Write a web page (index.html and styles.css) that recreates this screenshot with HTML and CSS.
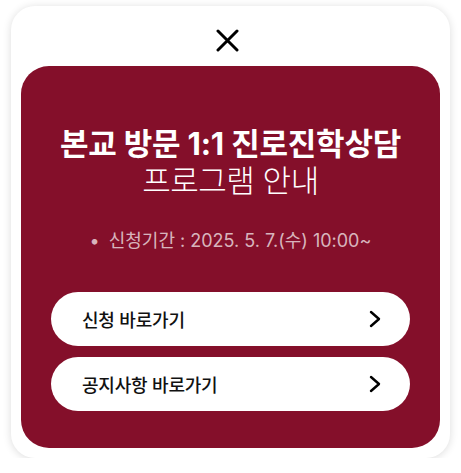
FILE: index.html
```html
<!DOCTYPE html>
<html lang="ko">
<head>
<meta charset="utf-8">
<title>본교 방문 1:1 진로진학상담</title>
<link rel="stylesheet" href="styles.css">
</head>
<body>
<div class="popup">
  <div class="popup-head">
    <button class="close" aria-label="닫기">
      <svg width="23" height="23" viewBox="0 0 23 23"><path d="M2 2 L21 21 M21 2 L2 21" stroke="#000" stroke-width="3" stroke-linecap="round" fill="none"/></svg>
    </button>
  </div>
  <div class="panel">
    <h1 class="title"><strong>본교 방문 1:1 진로진학상담</strong><span>프로그램 안내</span></h1>
    <p class="period"><span class="dot">•</span>신청기간 : 2025. 5. 7.(수) 10:00~</p>
    <div class="links">
      <a class="link" href="#"><span>신청 바로가기</span>
        <svg width="12" height="18" viewBox="0 0 12 18"><path d="M2 2 L10 9 L2 16" stroke="#000" stroke-width="2.4" fill="none" stroke-linecap="round" stroke-linejoin="round"/></svg>
      </a>
      <a class="link" href="#"><span>공지사항 바로가기</span>
        <svg width="12" height="18" viewBox="0 0 12 18"><path d="M2 2 L10 9 L2 16" stroke="#000" stroke-width="2.4" fill="none" stroke-linecap="round" stroke-linejoin="round"/></svg>
      </a>
    </div>
  </div>
</div>
</body>
</html>
```
FILE: styles.css
```css
html, body {
  margin: 0;
  padding: 0;
  background: #fff;
}
body {
  font-family: "Inter", "Noto Sans CJK KR", "Noto Sans", sans-serif;
  padding: 6px 11px 0 11px;
}
.popup {
  width: 439px;
  height: 452px;
  box-sizing: border-box;
  background: #fff;
  border-radius: 24px;
  box-shadow: 0 1px 8px rgba(0, 0, 0, 0.14);
  padding: 0 10px 10px 10px;
  display: flex;
  flex-direction: column;
}
.popup-head {
  height: 60px;
  display: flex;
  justify-content: center;
  align-items: flex-start;
  padding-top: 23px;
  padding-right: 6px;
  box-sizing: border-box;
}
.close {
  border: 0;
  background: none;
  padding: 0;
  width: 23px;
  height: 23px;
  display: block;
  cursor: pointer;
}
.close svg { display: block; }
.panel {
  flex: 1;
  background: #840f2a;
  border-radius: 28px;
  padding: 59px 30px 0 30px;
  display: flex;
  flex-direction: column;
  align-items: center;
}
.title {
  margin: 0;
  color: #fff;
  text-align: center;
  font-size: 31px;
  line-height: 37px;
  font-weight: 400;
  white-space: nowrap;
}
.title strong {
  display: block;
  font-weight: 700;
  letter-spacing: -0.2px;
}
.title span {
  display: block;
  font-weight: 300;
  letter-spacing: -0.5px;
}
.period {
  margin: 30px 0 0 0;
  color: rgba(255, 255, 255, 0.7);
  font-size: 18px;
  line-height: 24px;
  letter-spacing: 0;
}
.dot {
  margin-right: 9px;
}
.links {
  margin-top: 39px;
  width: 100%;
  display: flex;
  flex-direction: column;
  gap: 11px;
}
.link {
  height: 54px;
  border-radius: 27px;
  background: #fff;
  color: #111;
  text-decoration: none;
  display: flex;
  align-items: center;
  justify-content: space-between;
  padding: 0 29px 0 31px;
  font-size: 18px;
  font-weight: 500;
  letter-spacing: -0.2px;
}
.link svg { display: block; }
```
